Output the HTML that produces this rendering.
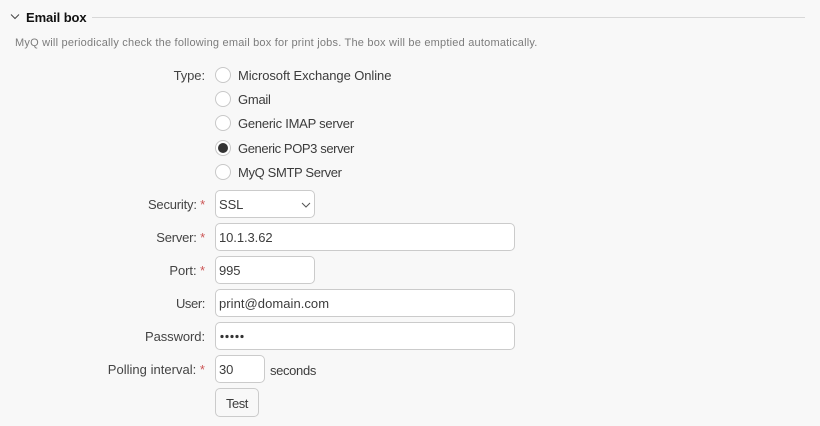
<!DOCTYPE html>
<html>
<head>
<meta charset="utf-8">
<style>
html,body{margin:0;padding:0;width:820px;height:426px;overflow:hidden;background:#f8f8f8;font-family:"Liberation Sans",sans-serif;font-size:13px;color:#3c3c3c;letter-spacing:-.08px;}
.t{position:absolute;white-space:nowrap;line-height:16px;}
.l{position:absolute;right:615px;white-space:nowrap;line-height:16px;text-align:right;color:#444;}
.l i{font-style:normal;color:#c55;}
.r{position:absolute;left:215px;width:14px;height:14px;border:1px solid #c8c8c8;border-radius:50%;background:#fff;}
.b{position:absolute;left:215px;height:26px;border:1px solid #cbcbcb;border-radius:5px;background:#fff;box-sizing:content-box;}
.v{position:absolute;left:219px;white-space:nowrap;line-height:16px;color:#3c3c3c;}
</style>
</head>
<body>
<svg style="position:absolute;left:10px;top:13px" width="10" height="8" viewBox="0 0 10 8"><path d="M1 1.5L5 5.5L9 1.5" fill="none" stroke="#444" stroke-width="1"/></svg>
<div class="t" style="left:26px;top:10px;font-weight:bold;color:#111;letter-spacing:-.1px">Email box</div>
<div style="position:absolute;left:92px;top:17px;width:713px;height:1px;background:#d8d8d8"></div>
<div class="t" style="left:15px;top:35px;font-size:11px;color:#7c7c7c;letter-spacing:.21px">MyQ will periodically check the following email box for print jobs. The box will be emptied automatically.</div>

<div class="l" style="top:68px">Type:</div>
<div class="r" style="top:67px"></div><div class="t" style="left:238px;top:68px">Microsoft Exchange Online</div>
<div class="r" style="top:91px"></div><div class="t" style="left:238px;top:92px;letter-spacing:-.25px">Gmail</div>
<div class="r" style="top:115px"></div><div class="t" style="left:238px;top:116px;letter-spacing:-.24px">Generic IMAP server</div>
<div class="r" style="top:140px"></div><div style="position:absolute;left:218px;top:143px;width:10px;height:10px;border-radius:50%;background:#333"></div><div class="t" style="left:238px;top:141px;letter-spacing:-.4px">Generic POP3 server</div>
<div class="r" style="top:164px"></div><div class="t" style="left:238px;top:165px;letter-spacing:-.35px">MyQ SMTP Server</div>

<div class="l" style="top:197px;letter-spacing:-.2px">Security: <i>*</i></div>
<div class="b" style="top:190px;width:98px"></div><div class="v" style="top:197px">SSL</div>
<svg style="position:absolute;left:301px;top:202px" width="10" height="6" viewBox="0 0 10 6"><path d="M1 1L5 5L9 1" fill="none" stroke="#555" stroke-width="1"/></svg>

<div class="l" style="top:230px;letter-spacing:-.2px">Server: <i>*</i></div>
<div class="b" style="top:223px;width:298px"></div><div class="v" style="top:230px">10.1.3.62</div>

<div class="l" style="top:263px">Port: <i>*</i></div>
<div class="b" style="top:256px;width:98px"></div><div class="v" style="top:263px">995</div>

<div class="l" style="top:296px;letter-spacing:-.4px">User:</div>
<div class="b" style="top:289px;width:298px"></div><div class="v" style="top:296px;letter-spacing:.05px">print@domain.com</div>

<div class="l" style="top:329px">Password:</div>
<div class="b" style="top:322px;width:298px"></div>
<svg style="position:absolute;left:220px;top:334px" width="26" height="5"><g fill="#333"><circle cx="2" cy="2.5" r="1.6"/><circle cx="7" cy="2.5" r="1.6"/><circle cx="12" cy="2.5" r="1.6"/><circle cx="17" cy="2.5" r="1.6"/><circle cx="22" cy="2.5" r="1.6"/></g></svg>

<div class="l" style="top:362px;letter-spacing:.02px">Polling interval: <i>*</i></div>
<div class="b" style="top:355px;width:48px"></div><div class="v" style="top:362px">30</div>
<div class="t" style="left:270px;top:363px;letter-spacing:-.35px">seconds</div>

<div class="b" style="top:388px;width:42px;height:27px;background:#f8f8f8"></div>
<div class="t" style="left:226px;top:396px;letter-spacing:-.5px">Test</div>
</body>
</html>
